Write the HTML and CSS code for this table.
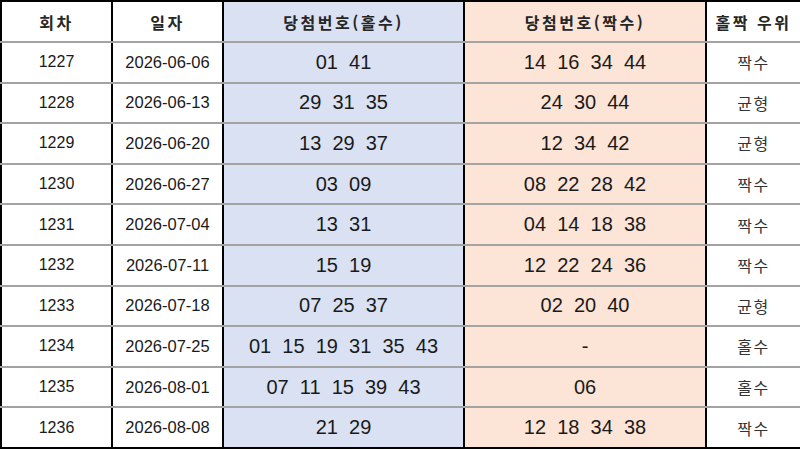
FILE: index.html
```html
<!DOCTYPE html>
<html lang="ko">
<head>
<meta charset="utf-8">
<link rel="stylesheet" href="styles.css">
</head>
<body>
<table class="lotto">
  <colgroup>
    <col class="c-no"><col class="c-date"><col class="c-odd"><col class="c-even"><col class="c-win">
  </colgroup>
  <thead>
    <tr>
      <th>회차</th><th>일자</th><th class="odd">당첨번호(홀수)</th><th class="even">당첨번호(짝수)</th><th>홀짝 우위</th>
    </tr>
  </thead>
  <tbody>
    <tr><td class="no">1227</td><td class="date">2026-06-06</td><td class="odd">01&nbsp; 41</td><td class="even">14&nbsp; 16&nbsp; 34&nbsp; 44</td><td class="win">짝수</td></tr>
    <tr><td class="no">1228</td><td class="date">2026-06-13</td><td class="odd">29&nbsp; 31&nbsp; 35</td><td class="even">24&nbsp; 30&nbsp; 44</td><td class="win">균형</td></tr>
    <tr><td class="no">1229</td><td class="date">2026-06-20</td><td class="odd">13&nbsp; 29&nbsp; 37</td><td class="even">12&nbsp; 34&nbsp; 42</td><td class="win">균형</td></tr>
    <tr><td class="no">1230</td><td class="date">2026-06-27</td><td class="odd">03&nbsp; 09</td><td class="even">08&nbsp; 22&nbsp; 28&nbsp; 42</td><td class="win">짝수</td></tr>
    <tr><td class="no">1231</td><td class="date">2026-07-04</td><td class="odd">13&nbsp; 31</td><td class="even">04&nbsp; 14&nbsp; 18&nbsp; 38</td><td class="win">짝수</td></tr>
    <tr><td class="no">1232</td><td class="date">2026-07-11</td><td class="odd">15&nbsp; 19</td><td class="even">12&nbsp; 22&nbsp; 24&nbsp; 36</td><td class="win">짝수</td></tr>
    <tr><td class="no">1233</td><td class="date">2026-07-18</td><td class="odd">07&nbsp; 25&nbsp; 37</td><td class="even">02&nbsp; 20&nbsp; 40</td><td class="win">균형</td></tr>
    <tr><td class="no">1234</td><td class="date">2026-07-25</td><td class="odd">01&nbsp; 15&nbsp; 19&nbsp; 31&nbsp; 35&nbsp; 43</td><td class="even">-</td><td class="win">홀수</td></tr>
    <tr><td class="no">1235</td><td class="date">2026-08-01</td><td class="odd">07&nbsp; 11&nbsp; 15&nbsp; 39&nbsp; 43</td><td class="even">06</td><td class="win">홀수</td></tr>
    <tr><td class="no">1236</td><td class="date">2026-08-08</td><td class="odd">21&nbsp; 29</td><td class="even">12&nbsp; 18&nbsp; 34&nbsp; 38</td><td class="win">짝수</td></tr>
  </tbody>
</table>
</body>
</html>
```
FILE: styles.css
```css
html, body {
  margin: 0;
  padding: 0;
  background: #ffffff;
}
.lotto {
  border-collapse: collapse;
  width: 800px;
  table-layout: fixed;
  border: 2px solid #000;
  color: #1a1a1a;
  font-family: "Liberation Sans", "Noto Sans CJK KR", sans-serif;
}
.c-no { width: 111px; }
.c-date { width: 111px; }
.c-odd { width: 241px; }
.c-even { width: 242px; }
.c-win { width: 95px; }
.lotto th, .lotto td {
  border-left: 2px solid #000;
  border-right: 2px solid #000;
  border-top: 2px solid #a3a3a3;
  border-bottom: 2px solid #a3a3a3;
  text-align: center;
  vertical-align: middle;
  padding: 0;
  white-space: nowrap;
}
.lotto thead tr { height: 41px; }
.lotto tbody tr { height: 40.6px; }
.lotto th {
  font-family: "Noto Sans CJK KR", sans-serif;
  font-weight: 700;
  font-size: 16px;
  letter-spacing: 2.5px;
  color: #262626;
  border-top: 2px solid #000;
}
.lotto tbody tr:last-child td { border-bottom: 2px solid #000; }
.odd { background: #d9e1f2; }
.even { background: #fce4d6; }
td.odd, td.even { font-size: 20px; }
td.no { font-size: 16px; }
td.date { font-size: 16.5px; }
td.win {
  font-family: "Noto Sans CJK KR", sans-serif;
  font-size: 16px;
  letter-spacing: 1.5px;
  color: #333;
}
```
